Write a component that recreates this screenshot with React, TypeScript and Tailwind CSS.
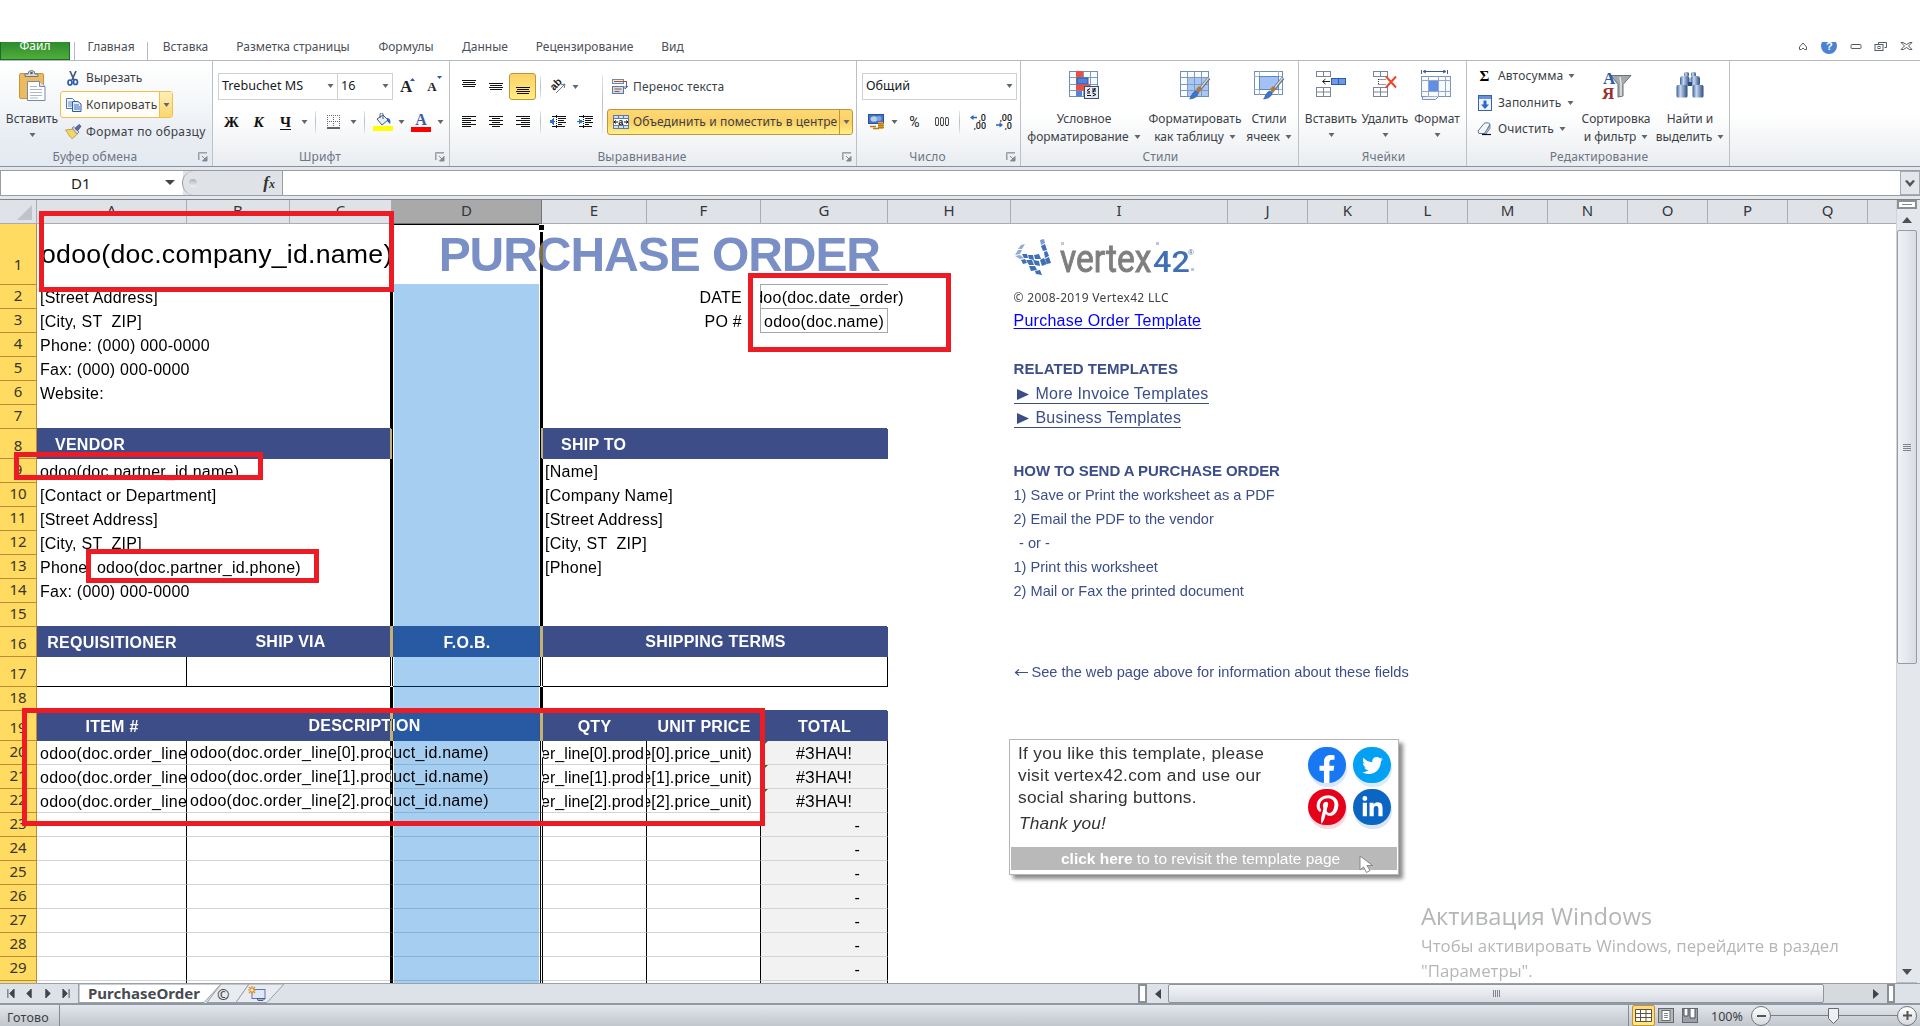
import React from "react";
import { FaFacebookF, FaTwitter, FaPinterestP, FaLinkedinIn } from "react-icons/fa";

type Kids = { children?: React.ReactNode };

/* ---------- small shared pieces ---------- */

const Caret = ({ c = "" }: { c?: string }) => (
  <svg viewBox="0 0 7 4" className={"h-1 w-[7px] shrink-0 " + c}>
    <path d="M0.5 0h6L3.5 4z" fill="#63676d" />
  </svg>
);

const Slot = ({ c, children }: Kids & { c: string }) => (
  <span className={"flex h-full shrink-0 items-center justify-center " + c}>{children}</span>
);

const Sep = ({ c }: { c: string }) => (
  <Slot c={c}>
    <span className="h-[22px] w-px bg-gradient-to-b from-[#e4e7eb] via-[#b9bec6] to-[#e4e7eb]" />
  </Slot>
);

const Launcher = () => (
  <svg viewBox="0 0 10 10" className="h-[10px] w-[10px]">
    <path d="M0.5 8V0.5H9" stroke="#9a9fa6" fill="none" />
    <path d="M1 1h8v1H2v6H1z" fill="#bfc3c9" />
    <path d="M4 4l3 3M9 4.5V9H4.5z" stroke="#85898f" fill="#85898f" />
  </svg>
);

function Group({ w, label, launcher, children, tint = false }: Kids & { w: string; label: string; launcher?: boolean; tint?: boolean }) {
  return (
    <section className={"flex h-[105px] shrink-0 flex-col border-r border-[#bcc0c7] " + w + (tint ? " bg-gradient-to-b from-transparent to-[#e4eaf1]" : "")}>
      <div className="flex h-[87px] shrink-0">{children}</div>
      <footer className="relative flex h-[17px] items-center justify-center pr-[22px] tracking-[0.150px] text-[#6d7482]">
        <span className={launcher ? "" : "translate-x-3"}>{label}</span>
        {launcher && <span className="absolute right-1 top-[4px]"><Launcher /></span>}
      </footer>
    </section>
  );
}

function Big({ w, icon, l1, l2 }: { w: string; icon: React.ReactNode; l1: string; l2?: string }) {
  return (
    <div className={"flex shrink-0 flex-col items-center pt-[9px] " + w}>
      <span className="flex h-[30px] items-center justify-center">{icon}</span>
      <span className="mt-[10px] h-[18px] shrink-0 leading-[18px]">{l1}</span>
      {l2 ? (
        <span className="flex h-[17px] shrink-0 items-center leading-[17px]">
          {l2}
          <Caret c="ml-[5px]" />
        </span>
      ) : (
        <span className="flex h-[14px] shrink-0 items-center"><Caret /></span>
      )}
    </div>
  );
}

/* ---------- ribbon icons ---------- */

const PasteIcon = () => (
  <svg viewBox="0 0 27 31" className="h-[31px] w-[27px]">
    <rect x="0.5" y="3.5" width="24" height="25" rx="1.5" fill="#edbb5f" stroke="#c8923a" />
    <path d="M6 6.500V4h3a3.500 3.500 0 0 1 7 0h3v2.500z" fill="#d6d9dd" stroke="#6f7680" />
    <circle cx="12.500" cy="3" r="1.300" fill="#555b66" />
    <path d="M8.500 11.500h12l5.500 5v14H8.500z" fill="#fff" stroke="#7689a8" />
    <path d="M20.500 11.500v5H26" fill="#dbe4f0" stroke="#7689a8" />
    <path d="M11 16.500h7M11 19.500h12M11 22.500h12M11 25.500h12M11 28h8" stroke="#a9b7cc" />
  </svg>
);
const CutIcon = () => (
  <svg viewBox="0 0 12 15" className="h-[15px] w-3">
    <path d="M3 0l4 9M9 0L5 9" stroke="#4a5a78" strokeWidth="1.700" />
    <ellipse cx="3" cy="11.500" rx="2" ry="2.500" fill="none" stroke="#2c5bb0" strokeWidth="1.700" />
    <ellipse cx="8.500" cy="11" rx="2" ry="2.500" fill="none" stroke="#2c5bb0" strokeWidth="1.700" />
  </svg>
);
const CopyIcon = () => (
  <svg viewBox="0 0 16 14" className="h-[14px] w-4">
    <path d="M0.500 0.500h6l2 2v8h-8z" fill="#f4f8ff" stroke="#4c76bb" />
    <path d="M2 4h4M2 6h4M2 8h4" stroke="#5f88cc" />
    <path d="M6.500 3.500h5.500l3 2.500v7.500H6.500z" fill="#e3edfb" stroke="#2f5ca8" />
    <path d="M8 7h5M8 9h6M8 11h6" stroke="#3d6dc0" />
  </svg>
);
const PainterIcon = () => (
  <svg viewBox="0 0 17 15" className="h-[15px] w-[17px]">
    <path d="M0.500 6l8-1 4 5-5 4.500C5 14 3 9 0.500 6z" fill="#f3d56a" stroke="#b08e35" strokeWidth="0.800" />
    <path d="M7 4l2-1.500 5 5.500-2 2z" fill="#dfe3ea" stroke="#6c7480" strokeWidth="0.800" />
    <path d="M10 4.500L14 0.500l2 1.800-3.500 4.500z" fill="#5d6cab" stroke="#37417a" strokeWidth="0.800" />
  </svg>
);
const BorderIcon = () => (
  <svg viewBox="0 0 14 14" className="h-[14px] w-[14px]">
    <path d="M0.500 0v12M6.500 0v12M12.500 0v12M0 0.500h13M0 6.500h13" stroke="#667" strokeDasharray="1 1" />
    <path d="M0 13h13" stroke="#000" strokeWidth="1.200" />
  </svg>
);
const BucketIcon = () => (
  <svg viewBox="0 0 20 18" className="h-[18px] w-5">
    <path d="M4 6l6-4 5 5-6 5z" fill="#e8eef6" stroke="#44597c" />
    <path d="M7 5V1.500a1.500 1.500 0 0 1 3 0V6" fill="none" stroke="#44597c" />
    <path d="M14 5c3 0 4 3 3 6l-3-3z" fill="#2f62b8" />
    <rect x="0" y="13" width="20" height="5" fill="#ffff00" />
  </svg>
);
const Lines = ({ rows }: { rows: [number, number, number][] }) => (
  <svg viewBox="0 0 14 14" className="h-[14px] w-[14px]" shapeRendering="crispEdges">
    {rows.map(([x, y, w]) => <rect key={y} x={x} y={y} width={w} height="1" fill="#111" />)}
  </svg>
);
const TopA = () => <Lines rows={[[0, 0, 14], [1, 2, 12], [0, 4, 14], [1, 6, 12]]} />;
const MidA = () => <Lines rows={[[0, 3, 14], [1, 5, 12], [0, 7, 14], [1, 9, 12]]} />;
const BotA = () => <Lines rows={[[0, 7, 14], [1, 9, 12], [0, 11, 14], [1, 13, 12]]} />;
const LeftA = () => <Lines rows={[[0, 1, 14], [0, 3, 9], [0, 5, 14], [0, 7, 9], [0, 9, 14], [0, 11, 9]]} />;
const CenA = () => <Lines rows={[[0, 1, 14], [3, 3, 8], [0, 5, 14], [3, 7, 8], [0, 9, 14], [3, 11, 8]]} />;
const RightA = () => <Lines rows={[[0, 1, 14], [5, 3, 9], [0, 5, 14], [5, 7, 9], [0, 9, 14], [5, 11, 9]]} />;

const OrientIcon = () => (
  <svg viewBox="0 0 17 15" className="h-[15px] w-[17px]">
    <text x="1" y="9" transform="rotate(-45 6 7)" fontSize="10.500" fontWeight="700" fontFamily="Liberation Sans" fill="#222">ab</text>
    <path d="M6 14L14.500 5.500M15 5l-4 .8M15 5l-.8 4" stroke="#777" fill="none" />
  </svg>
);
const IndentIcon = ({ right = false }) => (
  <svg viewBox="0 0 16 14" className="h-[14px] w-4" shapeRendering="crispEdges">
    <path d="M2 1.500h14M8 3.500h8M8 5.500h6M8 7.500h8M8 9.500h4M2 11.500h13" stroke="#111" />
    <path d="M6.500 0v14" stroke="#111" strokeDasharray="1 1" />
    <path d={right ? "M0 6.500h3M2 4l3 2.500L2 9z" : "M5 6.500H2M3 4L0 6.500 3 9z"} fill="#2f6fd0" stroke="#2f6fd0" />
  </svg>
);
const WrapIcon = () => (
  <svg viewBox="0 0 16 15" className="h-[15px] w-4">
    <rect x="0.500" y="0.500" width="11" height="4" fill="#e5ecf6" stroke="#7187a8" />
    <rect x="0.500" y="7.500" width="11" height="7" fill="#cfdcee" stroke="#5f779c" />
    <path d="M2 2.500h13M2.500 10h7M2.500 12.500h5" stroke="#a8551f" />
    <path d="M14.500 3v6M16 7l-3 3V7" stroke="#4a6a9c" fill="none" />
  </svg>
);
const MergeIcon = () => (
  <svg viewBox="0 0 16 14" className="h-[14px] w-4">
    <rect x="0.500" y="0.500" width="15" height="13" fill="#cfe0f4" stroke="#5b79a8" />
    <path d="M5.500 0v3M10.500 0v3M5.500 11v3M10.500 11v3M0 3.500h16M0 10.500h16" stroke="#5b79a8" />
    <rect x="1" y="4" width="14" height="6" fill="#fff" />
    <path d="M1 7h4M11 7h4M3 5.500L1 7l2 1.500M13 5.500L15 7l-2 1.500" stroke="#111" fill="none" />
    <text x="5.300" y="9.500" fontSize="9" fontWeight="700" fontFamily="Liberation Sans" fill="#111">a</text>
  </svg>
);
const MoneyIcon = () => (
  <svg viewBox="0 0 17 16" className="h-4 w-[17px]">
    <rect x="0.500" y="0.500" width="15" height="9" fill="#4673c4" stroke="#274f9c" />
    <ellipse cx="6" cy="5" rx="3.500" ry="2.800" fill="#b9cdf0" />
    <ellipse cx="11" cy="4.500" rx="2.500" ry="2.500" fill="#7fa2e0" />
    <path d="M10 8h5v7h-5z" fill="#f0b93a" />
    <path d="M10 9.500h6M10 11.500h6M10 13.500h6M2 12.500h6M5 14.500h6" stroke="#b97d14" strokeWidth="1.300" />
  </svg>
);
const Decimals = ({ top, bottom, arrow }: { top: string; bottom: string; arrow: "l" | "r" }) => (
  <svg viewBox="0 0 16 16" className="h-4 w-4">
    <text x="16" y="6.500" textAnchor="end" fontSize="9" fontFamily="Roboto" fontWeight="500" fill="#222">{top}</text>
    <text x="16" y="14.500" textAnchor="end" fontSize="9" fontFamily="Roboto" fontWeight="500" fill="#222">{bottom}</text>
    {arrow === "l" ? <path d="M0 3.500L3.500 1v1.800H7v1.500H3.500V6z" fill="#2b62bd" /> : <path d="M7 11L3.500 8.500v1.700H0v1.600h3.500v1.700z" fill="#2b62bd" />}
  </svg>
);
const GridBase = ({ fill }: { fill: string }) => (
  <>
    <rect x="0.500" y="0.500" width="28" height="25" fill="#fbfcfe" stroke="#6f8fb8" />
    <rect x="7" y="6" width="21" height="19" fill={fill} />
    <path d="M7.500 0v25M14.500 0v25M21.500 0v25M0 6.500h28M0 13.500h28M0 19.500h28" stroke="#7d9bc2" />
  </>
);
const Brush = () => (
  <>
    <path d="M29 7L20 18" stroke="#6d747e" strokeWidth="3.500" />
    <path d="M28.500 7L21 16.500" stroke="#d5d9df" strokeWidth="1.300" />
    <path d="M20.500 16.500l-3 3.500" stroke="#b07a35" strokeWidth="4.500" />
    <path d="M18.500 21c-1 5-4 6.500-9 7 2-2 2-6 6-8z" fill="#3e74c9" stroke="#2b579f" strokeWidth="0.600" />
  </>
);
const CondIcon = () => (
  <svg viewBox="0 0 31 29" className="h-[29px] w-[31px]">
    <GridBase fill="#f8fafd" />
    <rect x="7" y="0" width="7" height="6" fill="#ee4f3c" />
    <rect x="8" y="7" width="11" height="6" fill="#4f83dd" stroke="#2b57a8" />
    <rect x="7" y="13.500" width="14" height="6" fill="#ee4f3c" />
    <rect x="7" y="20" width="6" height="5.500" fill="#4f83dd" />
    <rect x="15.500" y="15.500" width="14" height="12" fill="#e6edf6" stroke="#3c4f6f" />
    <path d="M21 17.500l-3 2 3 1.500M18 22h3M18 24.500h4M23 18h4M23 20h4M26 17l-2 4.500M23.500 22l3.500 1.500-3.500 1.500" stroke="#111" fill="none" />
  </svg>
);
const TableIcon = () => (
  <svg viewBox="0 0 31 29" className="h-[29px] w-[31px]"><GridBase fill="#a9c6f5" /><Brush /></svg>
);
const StylesIcon = () => (
  <svg viewBox="0 0 31 29" className="h-[29px] w-[31px]">
    <rect x="0.500" y="0.500" width="28" height="23" fill="#fff" stroke="#6f8fb8" />
    <path d="M5.500 0v24M24.500 0v24M0 5.500h28M0 18.500h28" stroke="#9db4d2" />
    <rect x="5.500" y="5.500" width="19" height="13" fill="#a3c1f6" stroke="#5e88c8" />
    <Brush />
  </svg>
);
const MiniGrid = ({ y }: { y: number }) => (
  <>
    <rect x="0.500" y={y + 0.5} width="14" height="9" fill="#fff" stroke="#7b8798" />
    <path d={`M7.500 ${y}v10M0 ${y + 5}h15`} stroke="#7b8798" />
  </>
);
const InsertIcon = () => (
  <svg viewBox="0 0 31 28" className="h-7 w-[31px]">
    <rect x="0.500" y="0.500" width="14" height="5" fill="#fff" stroke="#7b8798" /><path d="M7.500 0v6" stroke="#7b8798" />
    <MiniGrid y={16} />
    <rect x="15.500" y="7.500" width="14" height="6" fill="#6c9ae8" stroke="#2f5ca8" /><path d="M22.500 7.500v6" stroke="#2f5ca8" />
    <path d="M7 10.500h7M9.500 8L6.500 10.500l3 2.500" stroke="#222" fill="none" />
  </svg>
);
const DeleteIcon = () => (
  <svg viewBox="0 0 25 28" className="h-7 w-[25px]">
    <rect x="0.500" y="0.500" width="14" height="5" fill="#fff" stroke="#7b8798" /><path d="M7.500 0v6" stroke="#7b8798" />
    <MiniGrid y={16} />
    <path d="M5.500 8.500h8M5.500 13.500h8M5.500 8v6" stroke="#333" strokeDasharray="1 1" />
    <path d="M13 5.500l10 11M23 5.500l-10 11" stroke="#ee4528" strokeWidth="2" />
  </svg>
);
const FormatIcon = () => (
  <svg viewBox="0 0 32 30" className="h-[30px] w-8">
    <path d="M0.500 0v4M26.500 0v4M3 1.500h21M5 0L2 1.500 5 3M22 0l3 1.500L22 3" stroke="#3b5c93" fill="none" />
    <rect x="0.500" y="6.500" width="29" height="20" fill="#f8fafd" stroke="#7b93b5" />
    <path d="M7.500 6v23M17.500 6v21M24.500 6v21M0 10.500h30M0 21.500h30" stroke="#92a8c6" />
    <rect x="8" y="11" width="9" height="10" fill="#5f90e6" />
    <path d="M1.500 27v2.500h13l3-3" fill="#eef2f8" stroke="#7b93b5" />
  </svg>
);
const FillIcon = () => (
  <svg viewBox="0 0 14 16" className="h-4 w-[14px]">
    <rect x="0.500" y="0.500" width="13" height="15" fill="#eef4fc" stroke="#3763ac" />
    <rect x="1" y="1" width="12" height="3" fill="#6391dc" />
    <path d="M5.500 5.500h3v4H11L7 14 3 9.500h2.500z" fill="#2f66c8" />
  </svg>
);
const EraserIcon = () => (
  <svg viewBox="0 0 15 14" className="h-[14px] w-[15px]">
    <path d="M1 9l6-7.500c1-1 5-1 6 .5L8 11.500H2z" fill="#f2f5fa" stroke="#5e7291" />
    <path d="M7.500 11L13 3v3.500L9 12z" fill="#a9bcdb" stroke="#5e7291" strokeWidth="0.700" />
    <path d="M5 12.500h9" stroke="#111" strokeWidth="1.200" />
  </svg>
);
const SortIcon = () => (
  <svg viewBox="0 0 31 30" className="h-[30px] w-[31px]">
    <path d="M10 5.500h20l-8 9V26l-5 1V14.500z" fill="#a5a8ac" stroke="#6c6f73" />
    <path d="M19 7l1 7v12" stroke="#e3e5e8" strokeWidth="1.500" fill="none" />
    <text x="2" y="13.500" fontSize="17" fontWeight="700" fontFamily="Liberation Serif" fill="#2f57a4">A</text>
    <text x="1" y="29" fontSize="17" fontWeight="700" fontFamily="Liberation Serif" fill="#973131">Я</text>
  </svg>
);
const FindIcon = () => (
  <svg viewBox="0 0 28 26" className="h-[26px] w-7">
    <defs>
      <linearGradient id="lens" x1="0" x2="1"><stop offset="0" stopColor="#3a5f9a" /><stop offset=".35" stopColor="#c5d8f0" /><stop offset="1" stopColor="#2c4b80" /></linearGradient>
    </defs>
    <rect x="8" y="0" width="5" height="5" rx="2" fill="url(#lens)" /><rect x="15" y="0" width="5" height="5" rx="2" fill="url(#lens)" />
    <rect x="4" y="4" width="9.500" height="10" rx="3" fill="url(#lens)" /><rect x="14.500" y="4" width="9.500" height="10" rx="3" fill="url(#lens)" />
    <rect x="12" y="10" width="4" height="4" fill="#2c4b80" />
    <rect x="0.500" y="13" width="11" height="12.500" rx="1.500" fill="url(#lens)" /><rect x="16.500" y="13" width="11" height="12.500" rx="1.500" fill="url(#lens)" />
  </svg>
);

/* ---------- top of the window ---------- */

const tabs: [string, string][] = [
  ["Вставка", "w-[45px] ml-[15px]"],
  ["Разметка страницы", "w-[114px] ml-[28px]"],
  ["Формулы", "w-[56px] ml-[28px]"],
  ["Данные", "w-[46px] ml-[28px]"],
  ["Рецензирование", "w-[99px] ml-[27px]"],
  ["Вид", "w-[21px] ml-[28px]"],
];

function TabStrip() {
  return (
    <nav className="flex h-[19px] shrink-0 overflow-hidden border-b border-[#b4b9c1] text-[#4b4f56]">
      <div className="flex h-[18px] w-[70px] items-center justify-center border border-t-0 border-[#1d6b2c] bg-gradient-to-b from-[#2d8a2f] to-[#4fae38] pb-[9px] text-white">Файл</div>
      <div className="z-10 ml-[4px] h-[19px] w-[74px] border-x border-[#b4b9c1] bg-white text-center leading-[9px]">Главная</div>
      {tabs.map(([t, c]) => (
        <span key={t} className={"flex justify-center whitespace-nowrap leading-[9px] " + c}>{t}</span>
      ))}
      <div className="ml-auto flex h-[12px] items-start gap-[13px] pr-[7px] text-[#4f545c]">
        <svg viewBox="0 0 10 9" className="h-[9px] w-[10px]"><path d="M1.500 5L5 1l3.500 4v2.500h-2L5 6 3.500 7.500h-2z" fill="none" stroke="#555b63" /></svg>
        <svg viewBox="0 4 16 12" className="h-3 w-4"><circle cx="8" cy="8" r="8" fill="#4b82d2" /><text x="5" y="12" fontSize="11" fontWeight="700" fontFamily="Liberation Sans" fill="#fff">?</text></svg>
        <svg viewBox="0 0 12 9" className="h-[9px] w-3"><rect x="1" y="2.500" width="10" height="4" rx="1" fill="#fff" stroke="#555b63" /></svg>
        <svg viewBox="0 0 13 10" className="-ml-px h-[10px] w-[13px]"><path d="M4.500 2V0.500h8v5h-2" fill="none" stroke="#555b63" /><rect x="1" y="2.500" width="8" height="6" fill="#fff" stroke="#555b63" /><rect x="4" y="4.500" width="2" height="2" fill="none" stroke="#555b63" /></svg>
        <svg viewBox="0 0 13 8" className="h-2 w-[13px]"><path d="M1 0.500h2l3.500 2 3.500-2h2L8.500 4 12 7.500h-2.500l-3-2-3 2H1L4.500 4z" fill="#fff" stroke="#555b63" /></svg>
      </div>
    </nav>
  );
}

function Ribbon() {
  return (
    <div className="flex h-[105px] shrink-0 bg-gradient-to-b from-white from-50% to-[#e9ecf0] text-[#3b3f46]">
      <Group w="w-[213px]" label="Буфер обмена" launcher tint>
        <Big w="w-[60px] pl-[4px]" icon={<PasteIcon />} l1="Вставить" />
        <div className="flex flex-col pt-[4px]">
          <div className="flex h-[26px] items-center tracking-[0.150px]"><Slot c="w-[26px]"><CutIcon /></Slot>Вырезать</div>
          <div className="flex h-[27px] w-[113px] items-center rounded-[3px] border border-[#ecc04c] bg-[#fffdf5]">
            <Slot c="w-[25px]"><CopyIcon /></Slot>
            <span className="w-[73px] tracking-[0.250px]">Копировать</span>
            <Slot c="w-[13px] border-l border-[#ecc04c] bg-gradient-to-b from-[#fdeeb8] to-[#fbd66c]"><Caret /></Slot>
          </div>
          <div className="flex h-[27px] items-center whitespace-nowrap tracking-[0.350px]"><Slot c="w-[26px]"><PainterIcon /></Slot>Формат по образцу</div>
        </div>
      </Group>

      <Group w="w-[237px]" label="Шрифт" launcher>
        <div className="flex flex-col pt-[12px]">
          <div className="flex h-[27px] items-center pl-[5px]">
            <div className="flex h-[27px] w-[120px] items-center justify-between border border-[#cdd0d5] bg-white pb-px pl-[3px] pr-[3px] text-[12.600px] text-[#16181c]">Trebuchet MS<Caret /></div>
            <div className="-ml-px flex h-[27px] w-[56px] items-center justify-between border border-[#cdd0d5] bg-white pb-px pl-[3px] pr-[3px] text-[12.600px] text-[#16181c]">16<Caret /></div>
            <span className="ml-[7px] flex items-start font-['Liberation_Serif'] text-[17px] font-bold leading-[18px] text-[#222]">A<svg viewBox="0 0 5 3" className="-ml-[2px] h-[3px] w-[5px]"><path d="M0 3h5L2.500 0z" fill="#2f57a4" /></svg></span>
            <span className="ml-[12px] flex items-start font-['Liberation_Serif'] text-[13px] font-bold leading-[22px] text-[#222]">A<svg viewBox="0 0 5 3" className="h-[3px] w-[5px]"><path d="M0 0h5L2.500 3z" fill="#2f57a4" /></svg></span>
          </div>
          <div className="mt-[9px] flex h-[26px] items-center pl-[5px] font-['Liberation_Serif'] text-[15px] font-bold text-[#111]">
            <Slot c="w-[27px]">Ж</Slot>
            <Slot c="w-[27px] italic">К</Slot>
            <Slot c="w-[27px] underline underline-offset-2">Ч</Slot>
            <Slot c="w-[10px]"><Caret /></Slot>
            <Sep c="w-[12px]" />
            <Slot c="w-[26px]"><BorderIcon /></Slot>
            <Slot c="w-[12px]"><Caret /></Slot>
            <Sep c="w-[10px]" />
            <Slot c="w-[28px]"><BucketIcon /></Slot>
            <Slot c="w-[8px]"><Caret /></Slot>
            <Slot c="w-[32px] flex-col"><span className="text-[16px] leading-[14px] text-[#3b5ca0]">A</span><span className="h-[5px] w-5 bg-[#ff0000]" /></Slot>
            <Slot c="w-[6px]"><Caret /></Slot>
          </div>
        </div>
      </Group>

      <Group w="w-[407px]" label="Выравнивание" launcher>
        <div className="flex w-[152px] shrink-0 flex-col pt-[12px]">
          <div className="flex h-[27px] items-center pl-[5px]">
            <Slot c="w-[28px]"><TopA /></Slot>
            <Slot c="w-[26px]"><MidA /></Slot>
            <Slot c="w-[27px] rounded-[3px] border border-[#c29338] bg-gradient-to-b from-[#fbd267] to-[#ffed83]"><BotA /></Slot>
            <Sep c="ml-px w-[6px]" />
            <Slot c="ml-[2px] w-[26px]"><OrientIcon /></Slot>
            <Slot c="w-[8px]"><Caret /></Slot>
          </div>
          <div className="mt-[9px] flex h-[26px] items-center pl-[5px]">
            <Slot c="w-[28px]"><LeftA /></Slot>
            <Slot c="w-[26px]"><CenA /></Slot>
            <Slot c="w-[27px]"><RightA /></Slot>
            <Sep c="ml-px w-[6px]" />
            <Slot c="w-[30px]"><IndentIcon /></Slot>
            <Slot c="w-[24px]"><IndentIcon right /></Slot>
          </div>
        </div>
        <span className="mt-[14px] h-[58px] w-px bg-gradient-to-b from-[#e4e7eb] via-[#b9bec6] to-[#e4e7eb]" />
        <div className="flex flex-col pl-[4px] pt-[12px]">
          <div className="flex h-[27px] items-center tracking-[0.150px]"><Slot c="w-[26px]"><WrapIcon /></Slot>Перенос текста</div>
          <div className="mt-[9px] flex h-[26px] w-[246px] items-center rounded-[3px] border border-[#c29338] bg-gradient-to-b from-[#fdd876] via-[#fcd164] to-[#ffef86]">
            <Slot c="w-[25px]"><MergeIcon /></Slot>
            <span className="w-[206px] whitespace-nowrap tracking-[0.120px]">Объединить и поместить в центре</span>
            <Slot c="w-[13px] border-l border-[#c29338]"><Caret /></Slot>
          </div>
        </div>
      </Group>

      <Group w="w-[164px]" label="Число" launcher>
        <div className="flex flex-col pt-[12px]">
          <div className="ml-[5px] flex h-[27px] w-[155px] items-center justify-between border border-[#cdd0d5] bg-white pb-px pl-[3px] pr-[3px] text-[12.600px] text-[#16181c]">Общий<Caret /></div>
          <div className="mt-[9px] flex h-[26px] items-center pl-[5px]">
            <Slot c="w-[28px]"><MoneyIcon /></Slot>
            <Slot c="w-[8px]"><Caret /></Slot>
            <Slot c="ml-[3px] w-[27px] font-['Roboto'] text-[14px] text-[#222]">%</Slot>
            <Slot c="w-[28px] font-['Roboto'] text-[13px] text-[#222]"><span className="scale-x-[0.680]">000</span></Slot>
            <Sep c="w-[6px]" />
            <Slot c="w-[31px]"><Decimals top=",0" bottom=",00" arrow="l" /></Slot>
            <Slot c="w-[22px]"><Decimals top=",00" bottom=",0" arrow="r" /></Slot>
          </div>
        </div>
      </Group>

      <Group w="w-[278px]" label="Стили">
        <Big w="w-[126px]" icon={<CondIcon />} l1="Условное" l2="форматирование" />
        <Big w="w-[96px]" icon={<TableIcon />} l1="Форматировать" l2="как таблицу" />
        <Big w="w-[52px]" icon={<StylesIcon />} l1="Стили" l2="ячеек" />
      </Group>

      <Group w="w-[168px]" label="Ячейки">
        <Big w="ml-[4px] w-[56px]" icon={<InsertIcon />} l1="Вставить" />
        <Big w="w-[52px]" icon={<DeleteIcon />} l1="Удалить" />
        <Big w="w-[52px]" icon={<FormatIcon />} l1="Формат" />
      </Group>

      <Group w="w-[263px]" label="Редактирование">
        <div className="ml-[4px] flex w-[106px] shrink-0 flex-col pt-[2px] tracking-[0.150px]">
          <div className="flex h-[26px] items-center"><Slot c="w-[27px] font-['Liberation_Serif'] text-[15px] font-bold text-black">Σ</Slot>Автосумма<Caret c="ml-[5px]" /></div>
          <div className="flex h-[27px] items-center"><Slot c="w-[27px]"><FillIcon /></Slot>Заполнить<Caret c="ml-[6px]" /></div>
          <div className="flex h-[26px] items-center"><Slot c="w-[27px]"><EraserIcon /></Slot>Очистить<Caret c="ml-[5px]" /></div>
        </div>
        <Big w="w-[78px]" icon={<SortIcon />} l1="Сортировка" l2="и фильтр" />
        <Big w="w-[70px]" icon={<FindIcon />} l1="Найти и" l2="выделить" />
      </Group>
    </div>
  );
}

function FormulaBar() {
  return (
    <div className="mt-[4px] flex h-[26px] shrink-0 border-y border-[#989da5] bg-[#dfe3e8]">
      <div className="flex w-[183px] items-center justify-between border-l border-[#989da5] bg-white pb-px pl-[70px] pr-[8px] text-[15px] text-[#1d1f23]">
        D1
        <svg viewBox="0 0 10 5" className="h-[5px] w-[10px]"><path d="M0 0h10L5 5z" fill="#444" /></svg>
      </div>
      <div className="-ml-px flex w-[101px] items-center justify-between rounded-l-full border-l border-r border-[#989da5] bg-[#dfe3e8] pl-[6px] pr-[7px]">
        <span className="h-2 w-2 rounded-full bg-gradient-to-b from-[#aeb3ba] to-[#f3f5f7]" />
        <span className="font-['Liberation_Serif'] text-[17px] font-bold italic text-[#333]">f<span className="text-[12px]">x</span></span>
      </div>
      <div className="flex-1 bg-white" />
      <div className="flex w-[20px] items-center justify-center border border-[#a6abb3] bg-[#e3e6eb]">
        <svg viewBox="0 0 10 7" className="h-[7px] w-[10px]"><path d="M0 1l2-1 3 3 3-3 2 1-5 6z" fill="#555" /></svg>
      </div>
    </div>
  );
}

/* ---------- worksheet ---------- */

const cols: [string, string][] = [
  ["A", "w-[150px]"], ["B", "w-[103px]"], ["C", "w-[102px]"], ["D", "w-[150px] bg-[#a9a9a9]! border-[#6f7378]!"],
  ["E", "w-[105px]"], ["F", "w-[114px]"], ["G", "w-[127px]"], ["H", "w-[123px]"], ["I", "w-[217px]"],
  ["J", "w-[80px]"], ["K", "w-[80px]"], ["L", "w-[80px]"], ["M", "w-[80px]"], ["N", "w-[80px]"],
  ["O", "w-[80px]"], ["P", "w-[80px]"], ["Q", "w-[80px]"], ["", "w-[28px] border-r-0"],
];

const rowHeight = (n: number) =>
  n === 1 ? "h-[61px] pt-[21px]" : n === 8 || n === 16 || n === 17 || n === 19 ? "h-[30px] pt-[4px]" : "h-[24px] pb-[2px]";

const Row = ({ h = "h-[24px]", children }: Kids & { h?: string }) => (
  <div className={"flex shrink-0 items-center whitespace-pre " + h}>{children}</div>
);
const C = ({ c, children }: Kids & { c: string }) => (
  <div className={"flex h-full shrink-0 items-center " + c}>{children}</div>
);
/* Keeps a text above the tint of the selected column. */
const Over = ({ c = "", children }: Kids & { c?: string }) => <span className={"relative z-[5] " + c}>{children}</span>;

const NAVY = "bg-[#3c4d87] shadow-[-1px_-1px_0_#3c4d87] font-bold text-white pt-[2px] ";

/* Side notes sit in column I, after the columns A to G and the empty H. */
const Note = ({ c = "", children }: Kids & { c?: string }) => (
  <C c={"ml-[123px] w-[217px] pl-[2.500px] text-[#3b4e87] " + c}>{children}</C>
);
const Small = ({ c = "", children }: Kids & { c?: string }) => (
  <Note c={"text-[14.600px] tracking-normal " + c}>{children}</Note>
);

const leftRows: [string, string, React.ReactNode][] = [
  ["[Contact or Department]", "[Company Name]", <Small>1) Save or Print the worksheet as a PDF</Small>],
  ["[Street Address]", "[Street Address]", <Small>2) Email the PDF to the vendor</Small>],
  ["[City, ST  ZIP]", "[City, ST  ZIP]", <Small c="pl-[8px]!">- or -</Small>],
  ["Phone: odoo(doc.partner_id.phone)", "[Phone]", <Small>1) Print this worksheet</Small>],
  ["Fax: (000) 000-0000", "", <Small>2) Mail or Fax the printed document</Small>],
];

const TemplateLink = ({ children }: Kids) => (
  <span className="mb-px flex h-[19px] items-center self-end border-b border-[#3b4e87] pl-[3px] leading-[18px] tracking-[0.200px]">
    <svg viewBox="0 0 12 11" className="mr-[7px] h-[11px] w-3 shrink-0"><path d="M0 0l12 5.500L0 11z" fill="#3b4e87" /></svg>
    {children}
  </span>
);

function VertexLogo() {
  const tiles = [
    "7,6 11,5 8,10 4,10", "4,11 8,11 6,15 1,16", "1,17 6,16 10,19 6,20", "7,21 11,20 13,24 9,25",
    "8,15 13,15 14,19 10,19", "14,16 19,16 20,21 15,20", "12,21 18,21 20,26 15,26", "15,27 21,27 23,31 17,32", "19,21 25,22 26,27 21,26",
    "20,16 25,15 27,20 21,20", "26,21 30,19 33,25 28,27", "26,1 30,0 31,4 27,6", "27,7 31,5 33,11 29,12", "30,13 33,12 35,17 31,19", "31,20 35,18 37,24 33,25", "21,32 26,31 28,36 22,35",
  ];
  return (
    <div className="flex h-[40px] items-start">
      <svg viewBox="0 0 38 37" className="mt-[2px] h-[37px] w-[38px]">
        {tiles.map((t, i) => <polygon key={t} points={t} fill={i < 3 ? "#8fabd6" : i === 11 ? "#7c9dd0" : "#3f6fb5"} />)}
      </svg>
      <div className="relative ml-[8px] h-[40px] w-[130px] tracking-normal">
        <span className="absolute left-0 top-px origin-left scale-x-[0.860] font-['Roboto'] text-[39px] leading-[42px] text-[#7f7f7f] [-webkit-text-stroke:0.900px]">vertex</span>
        <span className="absolute left-[93px] top-[4px] origin-left scale-x-[1.080] font-['Roboto'] text-[30px] font-medium leading-[42px] text-[#3f6fb5]">42</span>
        <span className="absolute left-[1px] top-[5px] h-[3px] w-[3px] bg-[#c9c9c9]" />
        <span className="absolute left-[96px] top-[5px] h-[3px] w-[3px] bg-[#b5c7e2]" />
        <span className="absolute left-[128px] top-[12px] text-[8px] leading-[8px] text-[#3f6fb5]">®</span>
        <span className="absolute left-[131px] top-[31px] h-[3px] w-[3px] bg-[#b5c7e2]" />
      </div>
    </div>
  );
}

function ShareCard() {
  const round = "flex h-[36px] w-[38px] items-center justify-center rounded-full text-white ";
  return (
    <div className="absolute left-[972px] top-[515px] flex h-[136px] w-[390px] flex-col border border-[#b5b5b5] bg-white tracking-normal text-[#333] shadow-[4px_4px_4px_#8c8c8c]">
      <div className="flex h-[107px] shrink-0 justify-between pl-[8px] pr-[7px] pt-[3px]">
        <div className="text-[17.300px] leading-[21.800px] tracking-[0.300px]">
          If you like this template, please<br />visit vertex42.com and use our<br />social sharing buttons.
          <div className="mt-[5px] pl-[1px] italic tracking-[0.150px]">Thank you!</div>
        </div>
        <div className="mt-[4px] grid grid-cols-2 gap-x-[7px] gap-y-[6px] self-start">
          <span className={round + "bg-[#1877f2] shadow-[1px_4px_0_#dbe8fb]"}><FaFacebookF className="mt-[8px] h-[28px] w-[20px]" /></span>
          <span className={round + "bg-[#03a1f3] shadow-[1px_4px_0_#d9ecfb]"}><FaTwitter className="h-[21px] w-[21px]" /></span>
          <span className={round + "bg-[#e60019] shadow-[1px_4px_0_#fbd9dd]"}><FaPinterestP className="mt-[5px] h-[29px] w-[25px]" /></span>
          <span className={round + "bg-[#0b65c2] shadow-[1px_4px_0_#d9e6f5]"}><FaLinkedinIn className="h-[23px] w-[23px]" /></span>
        </div>
      </div>
      <div className="relative mx-px flex h-[23px] items-center bg-[#b9b9b9] pl-[50px] text-[15.500px] text-white">
        <b>click here</b>&nbsp;to to revisit the template page
        <svg viewBox="0 0 15 18" className="absolute right-[23px] top-[8px] h-[18px] w-[15px]"><path d="M1 1v14l3.500-3 3 5.500 3.500-2-3-5h5.500z" fill="#fff" stroke="#888" /></svg>
      </div>
    </div>
  );
}

function Selection() {
  return (
    <>
      <div className="absolute bottom-0 left-[357px] top-[60px] w-[145px] bg-[rgba(0,114,215,0.350)]" />
      <div className="absolute bottom-0 left-[353px] top-0 z-10 w-[3px] bg-white mix-blend-difference" />
      <div className="absolute bottom-0 left-[503px] top-[8px] z-10 w-[3px] bg-white mix-blend-difference" />
      <div className="absolute left-[356px] top-0 h-px w-[146px] bg-black" />
      <div className="absolute left-[502px] top-px h-[5px] w-[5px] bg-black" />
    </>
  );
}

function RedMarks() {
  const m = "absolute border-[5px] border-[#ed1c24] ";
  return (
    <>
      <div className={m + "left-[39px] top-[11px] h-[81px] w-[355px]"} />
      <div className={m + "left-[14px] top-[252px] h-[28px] w-[249px]"} />
      <div className={m + "left-[748px] top-[73px] h-[79px] w-[203px]"} />
      <div className={m + "left-[86px] top-[349px] h-[34px] w-[233px]"} />
      <div className={m + "left-[22px] top-[508px] h-[118px] w-[743px]"} />
    </>
  );
}

function Cells() {
  const gray = "border-b border-[#d4d4d4] ";
  return (
    <div className="relative isolate flex-1 overflow-hidden bg-white font-['Liberation_Sans'] text-[16px] leading-[18px] tracking-[0.250px] text-black">
      <Row h="h-[61px]">
        <C c="w-[355px] pl-[4px] pb-px text-[26.670px]">odoo(doc.company_id.name)</C>
        <C c="w-[496px] justify-end pr-[8px] text-[48px] font-bold tracking-[-1.050px] text-[#7b8fc7]"><Over>PURCHASE ORDER</Over></C>
        <C c="ml-[123px] w-[217px] pl-[3px] pt-[5px]"><VertexLogo /></C>
      </Row>
      <Row>
        <C c="w-[505px] pl-[3px] pt-px">[Street Address]</C>
        <C c="w-[219px] justify-end pr-[19px] pt-px">DATE</C>
        <C c="-ml-px w-[128px] justify-center border-l border-b border-[#a6a6a6] shadow-[0_-1px_0_#a6a6a6] [clip-path:inset(-1px_-40px_0_0)]"><span className="pt-[2px]">odoo(doc.date_order)</span></C>
        <Note c="pt-px font-['Noto_Sans'] text-[12px] tracking-[0.320px] text-[#404040]!">© 2008-2019 Vertex42 LLC</Note>
      </Row>
      <Row>
        <C c="w-[505px] pl-[3px] pt-px">[City, ST  ZIP]</C>
        <C c="w-[219px] justify-end pr-[19px] pt-px">PO #</C>
        <C c="-ml-px w-[128px] justify-center border border-t-0 border-[#a6a6a6]"><span className="pt-[2px]">odoo(doc.name)</span></C>
        <Note c="text-[#0000ff]!"><span className="underline underline-offset-2">Purchase Order Template</span></Note>
      </Row>
      <Row><C c="w-[505px] pl-[3px] pt-px">Phone: (000) 000-0000</C></Row>
      <Row>
        <C c="w-[851px] pl-[3px] pt-px">Fax: (000) 000-0000</C>
        <Note c="text-[15px] font-bold tracking-[0.050px]">RELATED TEMPLATES</Note>
      </Row>
      <Row>
        <C c="w-[851px] pl-[3px] pt-px">Website:</C>
        <Note><TemplateLink>More Invoice Templates</TemplateLink></Note>
      </Row>
      <Row><C c="w-[851px]" /><Note><TemplateLink>Business Templates</TemplateLink></Note></Row>
      <Row h="h-[30px]">
        <C c={NAVY + "w-[355px] pl-[18px]"}>VENDOR</C>
        <C c="w-[150px]" />
        <C c={NAVY + "w-[346px] pl-[19px]"}>SHIP TO</C>
      </Row>
      <Row>
        <C c="w-[505px] pl-[3px] pt-px">odoo(doc.partner_id.name)</C>
        <C c="w-[346px] pl-[3px] pt-px">[Name]</C>
        <Note c="text-[15px] font-bold tracking-[-0.050px]">HOW TO SEND A PURCHASE ORDER</Note>
      </Row>
      {leftRows.map(([l, r, note], i) => (
        <Row key={i}>
          <C c="w-[505px] pl-[3px] pt-px">{l}</C>
          <C c="w-[346px] pl-[3px] pt-px">{r}</C>
          {note}
        </Row>
      ))}
      <Row />
      <Row h="h-[30px]">
        <C c={NAVY + "w-[150px] justify-center"}>REQUISITIONER</C>
        <C c={NAVY + "w-[205px] justify-center pl-[2px]"}><span className="-mt-[2px]">SHIP VIA</span></C>
        <C c={NAVY + "w-[150px] justify-center"}><Over>F.O.B.</Over></C>
        <C c={NAVY + "w-[346px] justify-center pl-px"}><span className="-mt-[2px]">SHIPPING TERMS</span></C>
      </Row>
      <Row h="h-[30px]">
        <C c="w-[150px] border-b border-r border-black" />
        <C c="w-[205px] border-b border-r border-black" />
        <C c="w-[150px] border-b border-r border-black" />
        <C c="w-[346px] border-b border-r border-black" />
        <Small><svg viewBox="0 0 14 9" className="mr-[4px] h-[9px] w-[14px] shrink-0"><path d="M14 4.500H1.500M5 1.500L1.500 4.500 5 7.500" fill="none" stroke="#3b4e87" strokeWidth="1.200" /></svg>See the web page above for information about these fields</Small>
      </Row>
      <Row />
      <Row h="h-[30px]">
        <C c={NAVY + "w-[150px] justify-center"}>ITEM #</C>
        <C c={NAVY + "w-[355px] justify-center"}><Over c="-mt-[2px]">DESCRIPTION</Over></C>
        <C c={NAVY + "w-[105px] justify-center"}>QTY</C>
        <C c={NAVY + "w-[114px] justify-center"}>UNIT PRICE</C>
        <C c={NAVY + "w-[127px] justify-center"}>TOTAL</C>
      </Row>
      {[0, 1, 2, 3, 4, 5, 6, 7, 8, 9].map((i) => {
        const filled = i < 3;
        return (
          <Row key={i}>
            <C c={gray + "w-[150px] overflow-hidden pl-[3px] pt-[2px] border-r border-r-black"}>{filled && "odoo(doc.order_line"}</C>
            <C c={gray + "w-[355px] pl-[3px] border-r border-r-black"}>{filled && <Over>{`odoo(doc.order_line[${i}].product_id.name)`}</Over>}</C>
            <C c={gray + "w-[105px] overflow-hidden pt-[2px] border-r border-r-black tracking-[0.050px]"}>{filled && <span className="-ml-px">{`er_line[${i}].prod`}</span>}</C>
            <C c={gray + "w-[114px] justify-end overflow-hidden pr-[8px] pt-[2px] border-r border-r-black"}>{filled && `e[${i}].price_unit)`}</C>
            <C c={gray + "relative w-[127px] bg-[#f2f2f2] pt-[2px] border-r border-r-black " + (filled ? "justify-center" : "justify-end pr-[27px]")}>
              {filled ? "#ЗНАЧ!" : "-"}
              {filled && <span className="absolute left-0 top-0 border-r-[7px] border-t-[7px] border-r-transparent border-t-[#1a7a2e]" />}
            </C>
          </Row>
        );
      })}
      <div className="flex h-[3px]">
        <div className="w-[150px] border-r border-black" />
        <div className="w-[355px] border-r border-black" />
        <div className="w-[105px] border-r border-black" />
        <div className="w-[114px] border-r border-black" />
        <div className="w-[127px] border-r border-black bg-[#f2f2f2]" />
      </div>
      <ShareCard />
      <div className="absolute left-[1384px] top-[677px] font-['Open_Sans'] text-[16.800px] leading-[25px] tracking-normal text-[#b4b6b8]">
        <div className="mb-[2px] text-[23.800px] leading-[30px]">Активация Windows</div>
        Чтобы активировать Windows, перейдите в раздел<br />"Параметры".
      </div>
      <Selection />
    </div>
  );
}

function Sheet() {
  return (
    <div className="mt-[3px] flex h-[784px] shrink-0 border-t border-[#7f848c]">
      <div className="relative flex w-[1896px] flex-col">
        <div className="flex h-[24px] shrink-0 text-[15px] text-[#33363b]">
          <div className="flex w-[37px] items-end justify-end border-b border-r border-[#a9adb3] bg-[#dfe3e8] pb-[3px] pr-[4px]">
            <svg viewBox="0 0 15 15" className="h-[15px] w-[15px]"><path d="M15 0v15H0z" fill="#c0c4c9" /></svg>
          </div>
          {cols.map(([n, w], i) => (
            <div key={i} className={"flex shrink-0 items-center justify-center border-b border-r border-[#a9adb3] bg-[#dfe3e8] pb-[3px] " + w}>{n}</div>
          ))}
        </div>
        <div className="flex min-h-0 flex-1">
          <div className="relative z-10 flex w-[37px] shrink-0 flex-col overflow-hidden bg-[#ffdb61] text-[15px] text-[#3a3527]">
            {Array.from({ length: 29 }, (_, i) => i + 1).map((n) => (
              <div key={n} className={"flex shrink-0 items-center justify-center border-b border-r border-[#bd8a3c] leading-none " + rowHeight(n)}>{n}</div>
            ))}
            <div className="h-[3px] border-r border-[#bd8a3c]" />
          </div>
          <Cells />
        </div>
        <div className="absolute left-0 top-0 z-20"><div className="relative"><RedMarks /></div></div>
      </div>
      <div className="flex flex-1 flex-col border-l border-[#d0d4da] bg-[#e4e8ed] pr-[3px]">
        <div className="flex h-[9px] items-center justify-center border-2 border-[#8b9097] bg-white"><span className="h-px w-[10px] bg-[#888]" /></div>
        <div className="flex h-[21px] items-center justify-center"><svg viewBox="0 0 10 6" className="h-[6px] w-[10px]"><path d="M0 6h10L5 0z" fill="#4c4f54" /></svg></div>
        <div className="flex h-[434px] flex-col items-center justify-center gap-px rounded-[2px] border border-[#979ca4] bg-gradient-to-r from-[#f0f2f6] to-[#d9dde3]">
          {[0, 1, 2, 3].map((i) => <span key={i} className="h-px w-[8px] bg-[#80858d]" />)}
        </div>
        <div className="mt-auto flex h-[22px] items-center justify-center border-b border-[#b7bcc4]"><svg viewBox="0 0 10 6" className="h-[6px] w-[10px]"><path d="M0 0h10L5 6z" fill="#4c4f54" /></svg></div>
      </div>
    </div>
  );
}

/* ---------- bottom bars ---------- */

function SheetTabs() {
  const nav = ["M1 0v10M8 0v10L3 5z", "M7 0v10L2 5z", "M2 0v10l5-5z", "M8 0v10M1 0v10l5-5z"];
  return (
    <div className="flex h-[20px] shrink-0 border-t border-[#9aa0a8] bg-[#dde1e8]">
      <div className="flex w-[79px] items-center justify-between border-r border-[#9aa0a8] pl-[7px] pr-[8px]">
        {nav.map((d) => <svg key={d} viewBox="0 0 9 10" className="h-[9px] w-[8px]"><path d={d} fill="#3f444b" stroke="#3f444b" /></svg>)}
      </div>
      <div className="relative w-[210px]">
        <svg viewBox="0 0 210 19" className="absolute left-0 top-0 h-[19px] w-[210px]">
          <path d="M0 0h142L125 18.500H0z" fill="#fff" stroke="#9aa0a8" />
          <path d="M142 0h28L157 18.500h-29z" fill="#e8ebef" stroke="#9aa0a8" />
          <path d="M170 0h35L188 18.500h-31z" fill="#e8ebef" stroke="#9aa0a8" />
          <rect x="173" y="5.500" width="13" height="9" fill="#dfe8f6" stroke="#6378a5" />
          <path d="M178 14.500h8l-2 2h-5z" fill="#9fb2d6" stroke="#4b5f8d" />
          <path d="M173 2v8M169 6h8M170 3l6 6M176 3l-6 6" stroke="#dd8a1d" strokeWidth="1.200" />
          <circle cx="173" cy="6" r="1.500" fill="#fff3b0" />
        </svg>
        <span className="absolute left-[9px] top-0 text-[15px] font-bold leading-[19px] text-[#474b52]">PurchaseOrder</span>
        <span className="absolute left-[138px] top-0 text-[15px] leading-[20px] text-[#44484f]">©</span>
      </div>
      <div className="ml-auto flex w-[782px] items-stretch">
        <span className="w-[9px] border-2 border-[#8b9097] bg-white" />
        <span className="flex w-[21px] items-center justify-center bg-[#dde1e8]"><svg viewBox="0 0 6 10" className="h-[10px] w-[6px]"><path d="M6 0v10L0 5z" fill="#3f444b" /></svg></span>
        <span className="flex w-[656px] items-center justify-center gap-px rounded-[2px] border border-[#8f949d] bg-gradient-to-b from-[#f3f5f8] to-[#d8dce3]">
          {[0, 1, 2, 3].map((i) => <span key={i} className="h-[7px] w-px bg-[#80858d]" />)}
        </span>
        <span className="flex flex-1 items-center justify-end bg-[#d6dade] pr-[8px]"><svg viewBox="0 0 6 10" className="h-[10px] w-[6px]"><path d="M0 0v10L6 5z" fill="#3f444b" /></svg></span>
        <span className="mr-[25px] w-[8px] border-2 border-[#8b9097] bg-white" />
      </div>
    </div>
  );
}

function StatusBar() {
  return (
    <div className="flex h-[23px] shrink-0 items-center border-t-2 border-[#8e99a5] bg-gradient-to-b from-[#e3e6ea] to-[#c2c7cd] text-[12.500px] text-[#3b3f46]">
      <span className="flex h-full w-[60px] items-center border-r border-[#858a91] pl-[7px] pt-[4px] tracking-[0.200px]">Готово</span>
      <span className="ml-auto h-full w-px bg-[#858a91]" />
      <span className="ml-[3px] flex h-full w-[23px] items-center justify-center rounded-[2px] border border-[#c29338] bg-gradient-to-b from-[#fdd876] to-[#ffe97f]">
        <svg viewBox="0 0 17 13" className="h-[13px] w-[17px]"><path d="M0.500 0.500h16v12H0.500zM5.500 0v13M11 0v13M0 4.500h17M0 8.500h17" fill="#fff" stroke="#5d5340" /></svg>
      </span>
      <svg viewBox="0 0 16 15" className="ml-[3px] h-[15px] w-4"><rect x="0.500" y="0.500" width="15" height="14" fill="#b5b8bd" stroke="#65696f" /><rect x="4" y="2.500" width="8" height="10" fill="#fff" stroke="#65696f" /><path d="M6 5.500h4M6 7.500h4M6 9.500h4" stroke="#888" /></svg>
      <svg viewBox="0 0 16 15" className="ml-[8px] h-[15px] w-4"><rect x="0.500" y="0.500" width="15" height="14" fill="#9da1a7" stroke="#65696f" /><path d="M2 1v7h4V1M8 1v9h5V1" fill="#fff" stroke="#4c5056" /></svg>
      <span className="ml-[13px] w-[40px] pt-[2px] text-[12.500px]">100%</span>
      <span className="flex h-[20px] w-[20px] items-center justify-center rounded-full border border-[#72777e] bg-gradient-to-b from-white to-[#d5d9de]"><span className="h-[2px] w-[9px] bg-[#555]" /></span>
      <span className="relative flex h-full w-[126px] items-center">
        <span className="h-px w-full bg-[#7c8188]" />
        <svg viewBox="0 0 11 16" className="absolute left-[57px] top-[3px] h-4 w-[11px]"><path d="M0.500 0.500h10v10l-5 5-5-5z" fill="#eef0f3" stroke="#666b72" /></svg>
      </span>
      <span className="mr-[3px] flex h-[20px] w-[20px] items-center justify-center rounded-full border border-[#72777e] bg-gradient-to-b from-white to-[#d5d9de]">
        <svg viewBox="0 0 9 9" className="h-[9px] w-[9px]"><path d="M4.500 0v9M0 4.500h9" stroke="#555" strokeWidth="2" /></svg>
      </span>
    </div>
  );
}

export default function App() {
  return (
    <div className="flex h-[1026px] w-[1920px] flex-col overflow-hidden bg-[#e4e7ec] font-['Noto_Sans',sans-serif] text-[12px] leading-[18px]">
      <div className="h-[42px] shrink-0 bg-white" />
      <div className="shrink-0 bg-white"><TabStrip /></div>
      <Ribbon />
      <div className="h-px shrink-0 bg-[#8b9099]" />
      <div className="-mt-px shrink-0"><FormulaBar /></div>
      <Sheet />
      <SheetTabs />
      <StatusBar />
    </div>
  );
}
